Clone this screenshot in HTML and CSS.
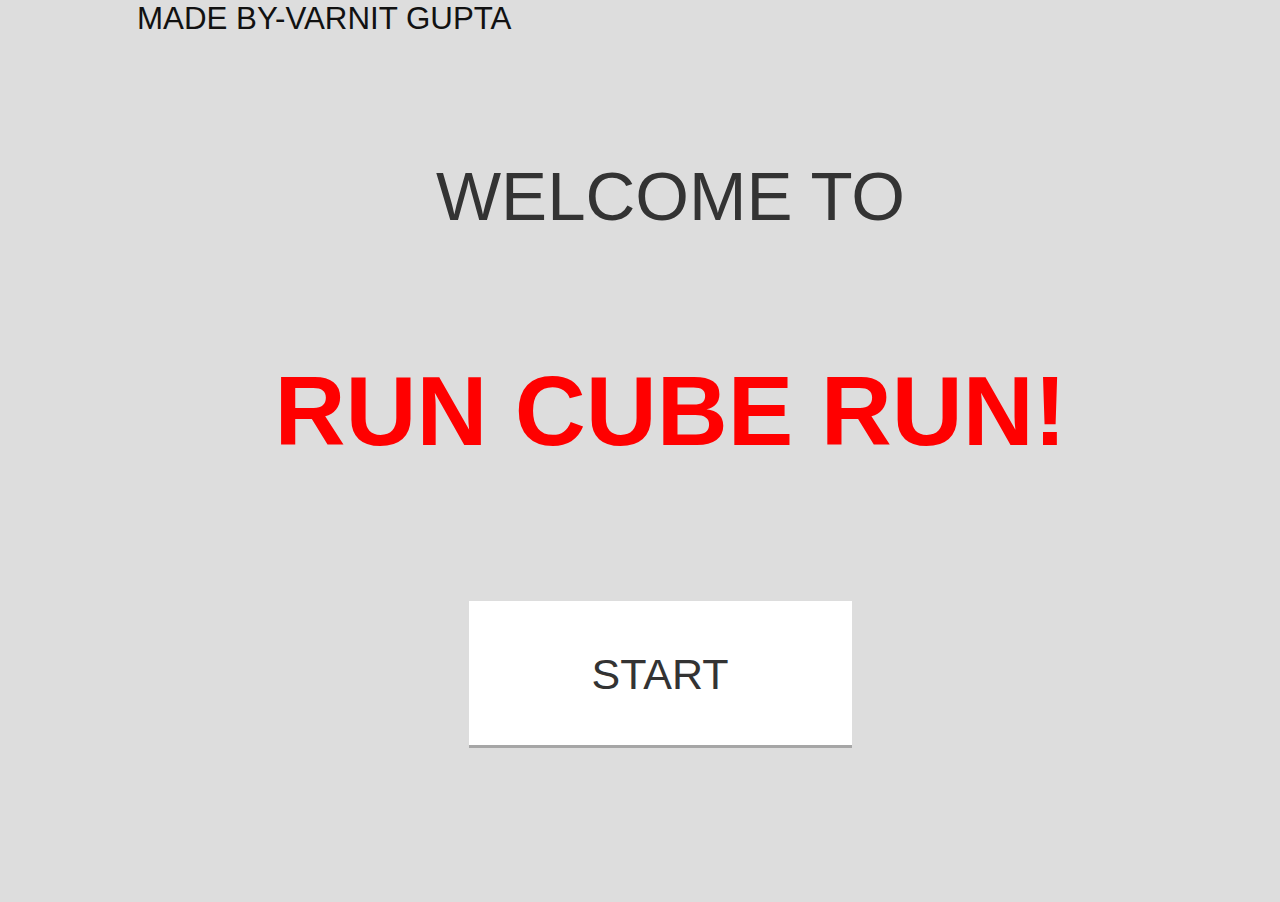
FILE: index.html
```html
<!DOCTYPE html>
<html lang="en">
<head>
<meta charset="utf-8">
<title>Run Cube Run</title>
<link rel="stylesheet" href="styles.css">
</head>
<body>
  <div class="credit">MADE BY-VARNIT GUPTA</div>
  <main class="menu">
    <h2 class="welcome">WELCOME TO</h2>
    <h1 class="title">RUN CUBE RUN!</h1>
    <button class="start" type="button">START</button>
  </main>
</body>
</html>
```

FILE: styles.css
```css
html, body {
  margin: 0;
  padding: 0;
  background: #dddddd;
  height: 100%;
}
body {
  font-family: "Liberation Sans", Arial, sans-serif;
  overflow: hidden;
}
.credit {
  margin: 1px 0 0 137px;
  font-size: 31.3px;
  line-height: 1.15;
  color: #111111;
}
.menu {
  display: flex;
  flex-direction: column;
  align-items: center;
  padding-left: 61px;
}
.welcome {
  margin: 120px 0 0 0;
  font-size: 69px;
  font-weight: normal;
  line-height: 1.15;
  color: #333333;
}
.title {
  margin: 119px 0 0 0;
  font-size: 98.3px;
  font-weight: bold;
  line-height: 1.15;
  color: #ff0000;
}
.start {
  margin: 133px 21px 0 0;
  width: 383px;
  height: 144px;
  border: none;
  background: #ffffff;
  box-shadow: 0 3px 0 #a6a6a6;
  font-family: "Liberation Sans", Arial, sans-serif;
  font-size: 43px;
  color: #333333;
  padding: 2px 0 0 0;
  cursor: pointer;
}
```
